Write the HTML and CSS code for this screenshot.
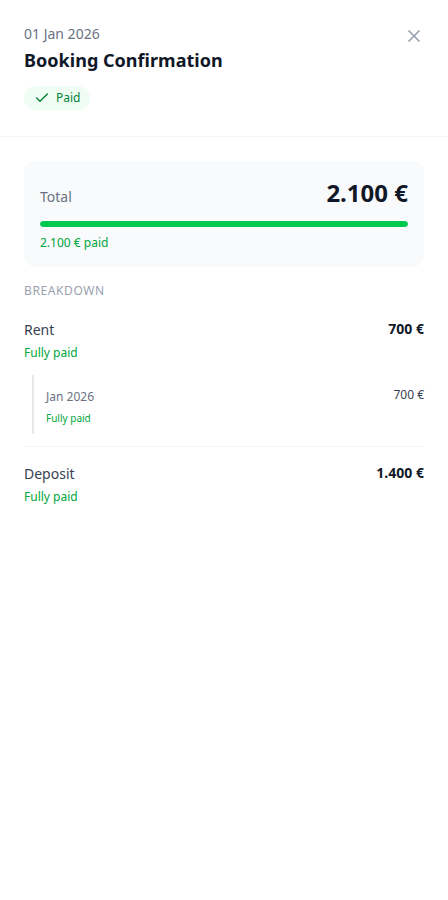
FILE: index.html
```html
<!DOCTYPE html>
<html lang="en">
<head>
<meta charset="utf-8">
<title>Booking Confirmation</title>
<link rel="stylesheet" href="styles.css">
</head>
<body>
<div class="panel">
  <header class="header">
    <div class="heading">
      <p class="date">01 Jan 2026</p>
      <h1 class="title">Booking Confirmation</h1>
      <span class="badge">
        <svg class="check" viewBox="0 0 24 24" aria-hidden="true"><path d="M20 6 9 17l-5-5"/></svg>
        Paid
      </span>
    </div>
    <button class="close" type="button" aria-label="Close">
      <svg viewBox="0 0 24 24" aria-hidden="true"><path d="M18 6 6 18"/><path d="m6 6 12 12"/></svg>
    </button>
  </header>
  <main class="content">
    <section class="summary">
      <div class="total">
        <span class="total-label">Total</span>
        <span class="total-amount">2.100 €</span>
      </div>
      <div class="progress"><div class="progress-bar"></div></div>
      <p class="status">2.100 € paid</p>
    </section>
    <h2 class="section-title">Breakdown</h2>
    <ul class="breakdown">
      <li class="item">
        <div class="row">
          <div><p class="name">Rent</p><p class="status">Fully paid</p></div>
          <span class="amount">700 €</span>
        </div>
        <div class="installments">
          <div class="row">
            <div><p class="month">Jan 2026</p><p class="month-status">Fully paid</p></div>
            <span class="month-amount">700 €</span>
          </div>
        </div>
      </li>
      <li class="item">
        <div class="row">
          <div><p class="name">Deposit</p><p class="status">Fully paid</p></div>
          <span class="amount">1.400 €</span>
        </div>
      </li>
    </ul>
  </main>
</div>
</body>
</html>
```
FILE: styles.css
```css
* { box-sizing: border-box; margin: 0; padding: 0; }
body { background: #fff; font-family: "Noto Sans", sans-serif; color: #101828; font-size: 14px; line-height: 20px; }
.panel { min-height: 900px; }
.header { display: flex; justify-content: space-between; align-items: flex-start; height: 137px; padding: 24px; border-bottom: 1px solid #f3f4f6; }
.date { color: #6a7282; }
.title { margin-top: 2px; font-size: 18px; line-height: 28px; font-weight: 700; letter-spacing: .03px; }
.badge { display: inline-flex; align-items: center; gap: 6px; margin-top: 12px; padding: 4px 10px; border-radius: 12px; background: #f0fdf4; color: #008236; font-size: 12px; line-height: 16px; }
svg { display: block; fill: none; stroke: currentColor; stroke-width: 2; stroke-linecap: round; stroke-linejoin: round; }
.check { width: 16px; height: 16px; }
.close { padding: 2px; margin-right: -2px; border: 0; background: none; color: #99a1af; }
.close svg { width: 20px; height: 20px; }
.content { padding: 24px; }
.summary { height: 106px; padding: 16px; border-radius: 12px; background: #f9fafb; }
.total { display: flex; justify-content: space-between; align-items: baseline; height: 32px; margin-bottom: 12px; }
.total-label { color: #6a7282; }
.total-amount { font-size: 24px; line-height: 32px; font-weight: 700; }
.progress { height: 6px; border-radius: 3px; background: #e5e7eb; overflow: hidden; }
.progress-bar { width: 100%; height: 100%; border-radius: 3px; background: #00c950; }
.status { color: #00a63e; font-size: 12px; line-height: 16px; }
.progress + .status { margin-top: 8px; }
.section-title { margin-top: 16px; color: #99a1af; font-size: 12px; line-height: 16px; font-weight: 400; letter-spacing: .6px; text-transform: uppercase; }
.breakdown { margin-top: 8px; list-style: none; }
.item { padding: 12px 0; }
.item + .item { border-top: 1px solid #f3f4f6; padding-top: 16px; }
.row { display: flex; justify-content: space-between; align-items: flex-start; }
.name { color: #364153; line-height: 22px; margin-bottom: 4px; }
.amount { font-weight: 700; letter-spacing: .03px; }
.installments { margin: 14px 0 0 8px; padding: 12px 0 8px 12px; border-left: 2px solid #e5e7eb; }
.month { color: #6a7282; font-size: 12px; line-height: 20px; margin-bottom: 3px; }
.month-amount { color: #364153; font-size: 12px; line-height: 16px; }
.month-status { color: #00a63e; font-size: 10px; line-height: 16px; }
```
